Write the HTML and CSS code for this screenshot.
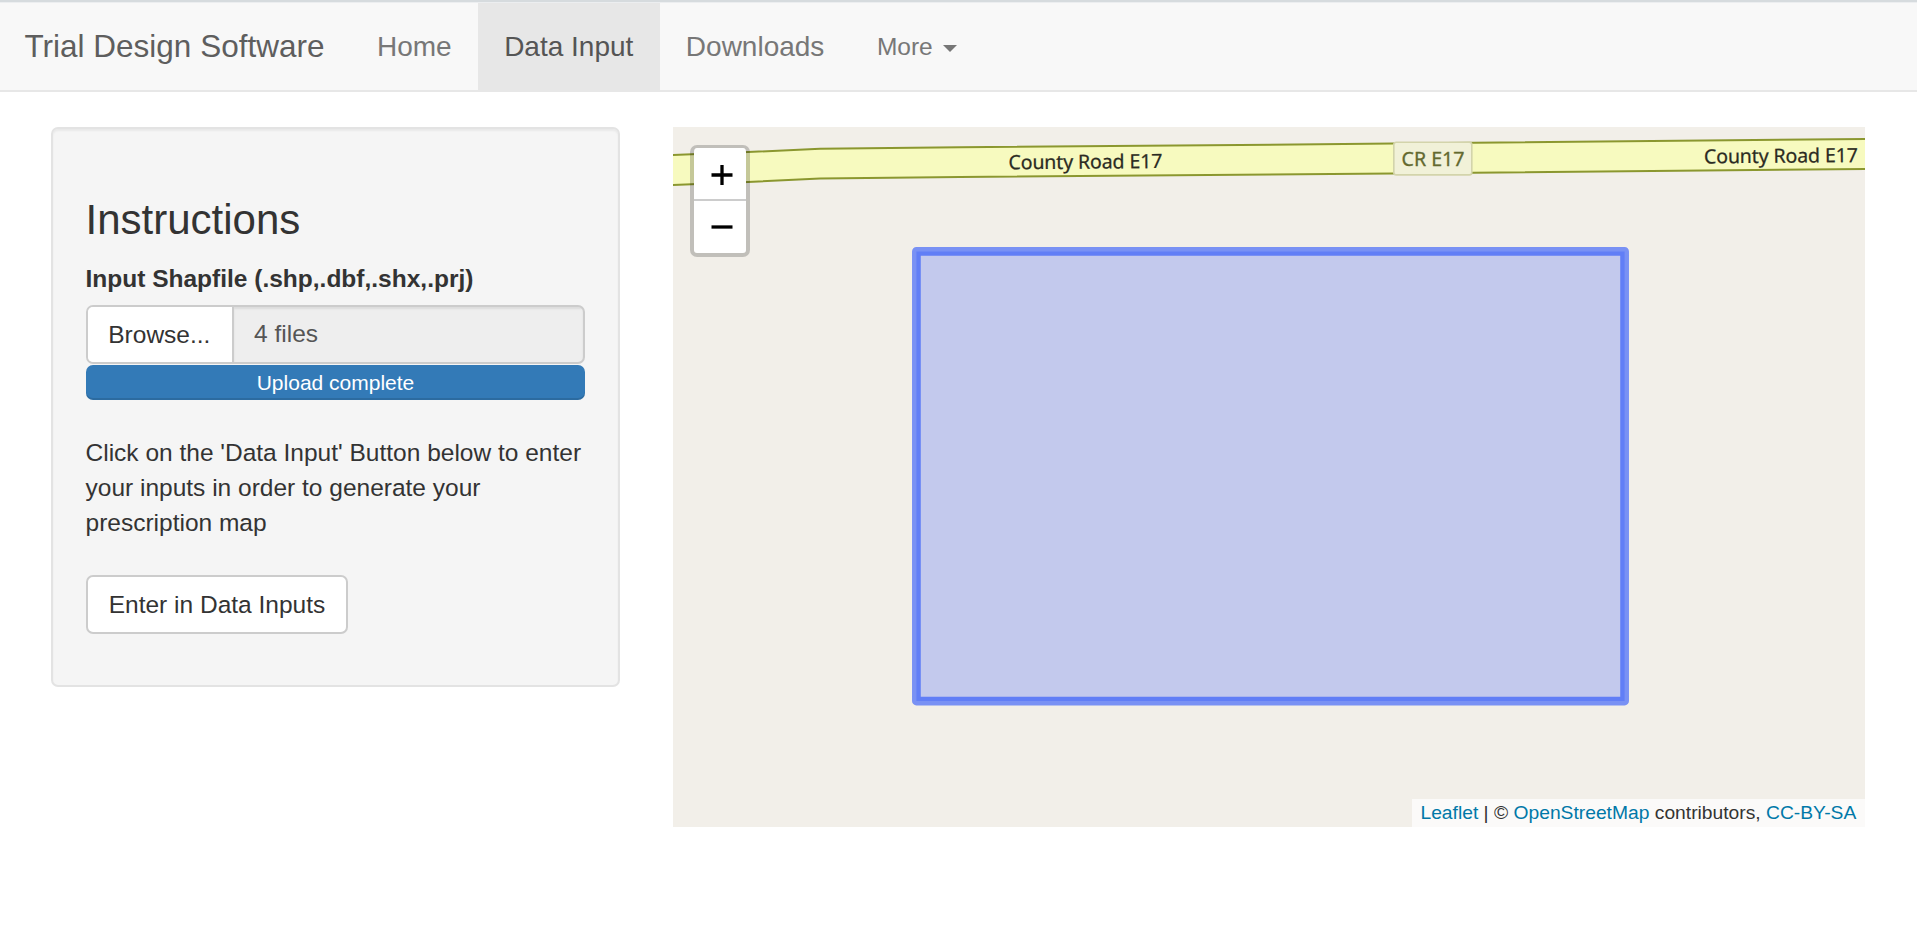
FILE: index.html
```html
<!DOCTYPE html>
<html lang="en">
<head>
<meta charset="utf-8">
<title>Trial Design Software</title>
<link rel="stylesheet" href="styles.css">
</head>
<body>
<nav class="navbar">
  <span class="brand">Trial Design Software</span>
  <a class="tab">Home</a>
  <a class="tab active">Data Input</a>
  <a class="tab">Downloads</a>
  <a class="tab more">More <i class="caret"></i></a>
</nav>
<main class="content">
  <section class="well">
    <h3 class="title">Instructions</h3>
    <label class="label">Input Shapfile (.shp,.dbf,.shx,.prj)</label>
    <div class="file-group">
      <span class="browse">Browse...</span>
      <span class="filename">4 files</span>
    </div>
    <div class="progress">Upload complete</div>
    <p class="help">Click on the 'Data Input' Button below to enter your inputs in order to generate your prescription map</p>
    <button class="btn">Enter in Data Inputs</button>
  </section>
  <section class="map">
    <svg class="canvas" width="1192" height="700" viewBox="673 127 1192 700">
      <path class="road" d="M660 155.5 L673 154.9 L748 152 L820 148.8 L960 147.3 L1393 143.6 L1500 142.5 L1880 138.8 V168.8 L1500 172.4 L1393 173.4 L960 177 L820 178.6 L748 182 L673 185 L660 185.5 Z"/>
      <text class="road-name" x="1008.5" y="169.3" textLength="154" transform="rotate(-.5 1008 169.3)">County Road E17</text>
      <text class="road-name" x="1704" y="163.4" textLength="154" transform="rotate(-.5 1703 163.4)">County Road E17</text>
      <rect class="shield" x="1393.8" y="142.3" width="78" height="32.6" rx="2.5"/>
      <text class="shield-text" x="1401.5" y="165.5" textLength="63">CR E17</text>
      <path class="field" d="M916.4 251.4 H1624.6 V701 H916.4 Z"/>
    </svg>
    <div class="zoom">
      <a class="zoom-btn"><svg width="22" height="22" viewBox="0 0 22 22"><path d="M.5 11 H21.5 M11 1 V21"/></svg></a>
      <a class="zoom-btn"><svg width="22" height="22" viewBox="0 0 22 22"><path d="M.5 11 H21.5"/></svg></a>
    </div>
    <div class="attribution"><a>Leaflet</a> | © <a>OpenStreetMap</a> contributors, <a>CC-BY-SA</a></div>
  </section>
</main>
</body>
</html>
```
FILE: styles.css
```css
* { box-sizing: border-box; }
body {
  margin: 0;
  background: #fff;
  color: #333;
  font: 24.5px/35px "Liberation Sans", Arial, sans-serif;
}
.navbar {
  display: flex;
  height: 92px;
  padding-left: 24.5px;
  background: #f8f8f8;
  border-top: 2px solid #d6dbde;
  border-bottom: 2px solid #e7e7e7;
  box-shadow: inset 0 1px #eceef0;
  line-height: 89px;
}
.brand { width: 326.2px; font-size: 31.5px; color: #5e5e5e; white-space: nowrap; }
.tab {
  margin-top: 1px;
  padding: 0 26.25px;
  height: 89px;
  line-height: 87px;
  font-size: 28px;
  color: #777;
  white-space: nowrap;
}
.tab.active { background: #e7e7e7; color: #555; }
.more { font-size: 24.5px; }
.caret {
  display: inline-block;
  margin-left: 3.5px;
  vertical-align: middle;
  border-top: 7px solid #777;
  border-left: 7px solid transparent;
  border-right: 7px solid transparent;
}
.content {
  display: flex;
  align-items: flex-start;
  gap: 53px;
  padding: 35px 52px 0 51px;
}
.well {
  width: 569px;
  height: 560px;
  padding: 68px 33px 0;
  background: #f5f5f5;
  border: 2px solid #e3e3e3;
  border-radius: 7px;
  box-shadow: inset 0 2px 2px rgba(0, 0, 0, .05);
}
.title { margin: 0 0 18px -.5px; font-size: 42px; font-weight: 500; line-height: 46px; }
.label { display: block; margin: 0 0 9px -.5px; height: 35px; font-weight: 700; }
.file-group {
  display: flex;
  height: 59px;
  border: 2px solid #ccc;
  border-radius: 7px;
  background: #eee;
  overflow: hidden;
}
.browse {
  width: 146px;
  padding-left: 20.25px;
  line-height: 55px;
  background: #fff;
  border-right: 2px solid #ccc;
}
.filename {
  flex: 1;
  padding-left: 20px;
  line-height: 54px;
  color: #555;
  box-shadow: inset 0 2px 2px rgba(0, 0, 0, .075);
}
.progress {
  margin: 1px 0 35px;
  height: 35px;
  border-radius: 7px;
  background: #337ab7;
  box-shadow: inset 0 -2px rgba(0, 0, 0, .12);
  color: #fff;
  font-size: 21px;
  line-height: 35px;
  text-align: center;
}
.help { margin: 0 -4px 35px -.5px; }
.btn {
  display: block;
  width: 262px;
  height: 59px;
  padding: 0;
  border: 2px solid #ccc;
  border-radius: 7px;
  background: #fff;
  color: #333;
  font: inherit;
}
.map {
  position: relative;
  width: 1192px;
  height: 700px;
  overflow: hidden;
  background: #f2efe9;
}
.canvas { display: block; }
.road { fill: #f7fabf; stroke: #8b972f; stroke-width: 2; }
.road-name {
  font: 19.6px "Noto Sans", sans-serif;
  fill: #2b2b22;
  stroke: #2b2b22;
  stroke-width: .25;
}
.shield { fill: #f1f1d8; stroke: #d3d4ab; stroke-width: 1.6; }
.shield-text {
  font: 19.6px "Noto Sans", sans-serif;
  fill: #63692f;
  stroke: #63692f;
  stroke-width: .3;
}
.field {
  fill: #0b33ff;
  fill-opacity: .2;
  stroke: #03f;
  stroke-opacity: .5;
  stroke-width: 8.75;
  stroke-linejoin: round;
}
.zoom {
  position: absolute;
  top: 18px;
  left: 17px;
  width: 60px;
  height: 112px;
  border: 3.5px solid rgba(0, 0, 0, .2);
  border-width: 3px 4px 4px;
  border-radius: 7px;
  background: #fff;
  background-clip: padding-box;
}
.zoom-btn {
  display: flex;
  align-items: center;
  padding: 2px 0 0 16.5px;
  height: 51px;
}
.zoom-btn + .zoom-btn { height: 54px; padding-top: 0; border-top: 2px solid #ccc; }
.zoom-btn path { stroke: #000; stroke-width: 3.3; }
.attribution {
  position: absolute;
  right: 0;
  bottom: 0;
  height: 28px;
  padding: 0 8.75px;
  background: rgba(255, 255, 255, .7);
  font-size: 19.25px;
  line-height: 27px;
  white-space: nowrap;
}
.attribution a { color: #0078a8; }
```
